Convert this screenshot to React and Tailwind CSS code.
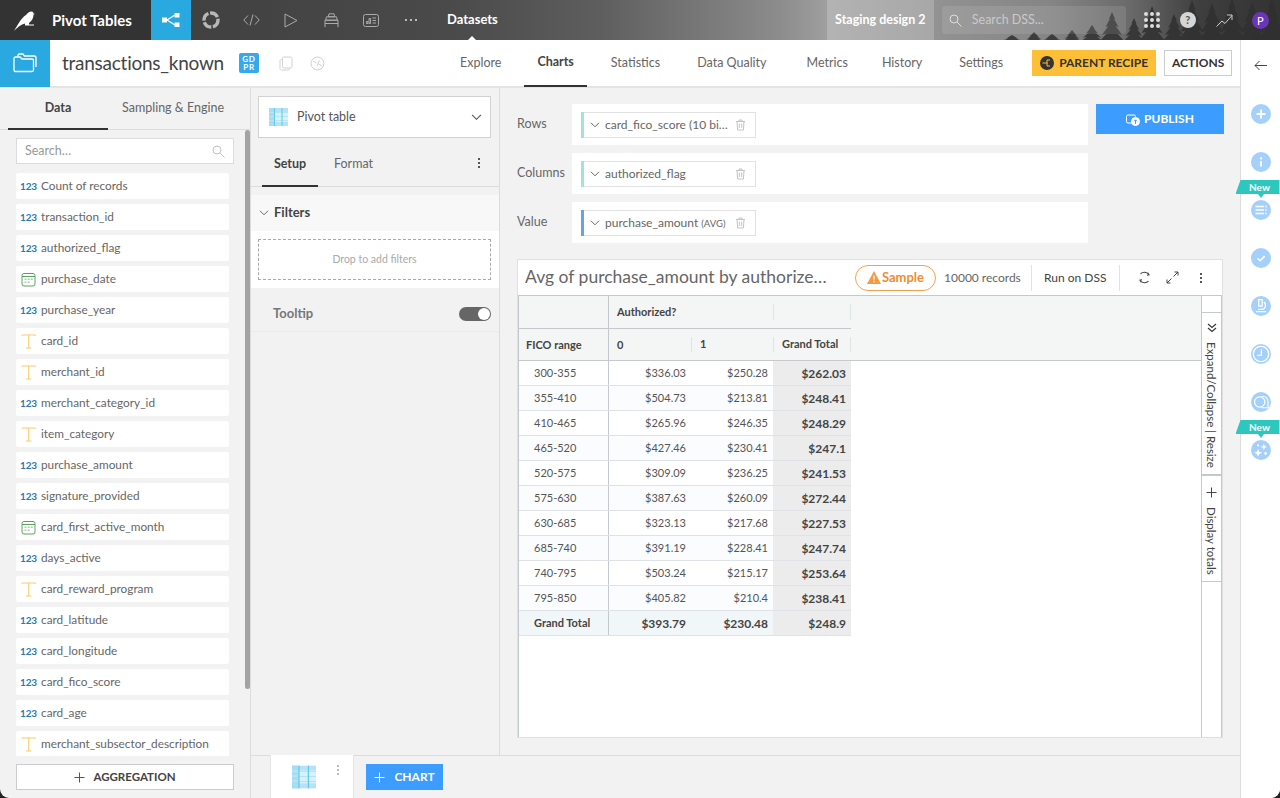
import React from "react";

const fields = [
  ["n", "Count of records"], ["n", "transaction_id"], ["n", "authorized_flag"], ["d", "purchase_date"],
  ["n", "purchase_year"], ["t", "card_id"], ["t", "merchant_id"], ["n", "merchant_category_id"],
  ["t", "item_category"], ["n", "purchase_amount"], ["n", "signature_provided"], ["d", "card_first_active_month"],
  ["n", "days_active"], ["t", "card_reward_program"], ["n", "card_latitude"], ["n", "card_longitude"],
  ["n", "card_fico_score"], ["n", "card_age"], ["t", "merchant_subsector_description"],
];

const rows = [
  ["300-355", "$336.03", "$250.28", "$262.03"], ["355-410", "$504.73", "$213.81", "$248.41"],
  ["410-465", "$265.96", "$246.35", "$248.29"], ["465-520", "$427.46", "$230.41", "$247.1"],
  ["520-575", "$309.09", "$236.25", "$241.53"], ["575-630", "$387.63", "$260.09", "$272.44"],
  ["630-685", "$323.13", "$217.68", "$227.53"], ["685-740", "$391.19", "$228.41", "$247.74"],
  ["740-795", "$503.24", "$215.17", "$253.64"], ["795-850", "$405.82", "$210.4", "$238.41"],
];

const trees = [
  [12, 35, 22], [34, 32, 20], [52, 34, 22], [72, 30, 20], [92, 25, 24], [112, 12, 26], [134, 18, 22], [152, 6, 28],
  [174, 14, 24], [192, 0, 30], [212, 3, 30], [232, -2, 30], [252, 2, 30], [272, -2, 30],
];

function treePoints(x, top, w) {
  const h = 42 - top;
  const pts = [[x, top]];
  const tiers = 4;
  for (let i = 1; i <= tiers; i++) {
    const y = top + (h * i) / tiers;
    const half = (w / 2) * (i / tiers);
    pts.push([x + half, y]);
    if (i < tiers) pts.push([x + half * 0.55, y - 1]);
  }
  for (let i = tiers; i >= 1; i--) {
    const y = top + (h * i) / tiers;
    const half = (w / 2) * (i / tiers);
    if (i < tiers) pts.push([x - half * 0.55, y - 1]);
    pts.push([x - half, y]);
  }
  return pts.map((p) => p.join(",")).join(" ");
}

function TypeIcon({ type }) {
  if (type === "n") return <span className="w-[17px] text-[10px] font-bold text-[#2b78b4] tracking-[-0.2px] leading-none text-center">123</span>;
  if (type === "d")
    return (
      <svg width="15" height="15" viewBox="0 0 15 15" fill="none" className="ml-[1px] mr-[1px]">
        <rect x="1" y="1.5" width="13" height="12.5" rx="2" stroke="#5f9f63" />
        <path d="M1 4.500h13" stroke="#5f9f63" />
        <path d="M3.500 6.500h2v1.600h-2zM6.600 6.500h2v1.600h-2zM9.700 6.500h2v1.600h-2zM3.500 9.500h2v1.600h-2zM6.600 9.500h2v1.600h-2z" fill="#a9cdaa" />
      </svg>
    );
  return (
    <svg width="15" height="15" viewBox="0 0 15 15" fill="none" className="ml-[1px] mr-[1px]">
      <path d="M1 1h13.500M1 1v.8M14.500 1v.8M7.700 1v13M5 14h5.400" stroke="#fbc96b" strokeWidth="1" />
    </svg>
  );
}

function Trash() {
  return (
    <svg width="11" height="12" viewBox="0 0 11 12" fill="none" stroke="#c4c4c4">
      <path d="M1 2.500h9M4 2.500V1h3v1.500M2 2.500l.6 8.500h5.800L9 2.500M4.300 4.500v4.500M6.700 4.500v4.500" />
    </svg>
  );
}

function Chevron({ size = 10, color = "#666" }) {
  return (
    <svg width={size} height={size * 0.6} viewBox="0 0 10 6" fill="none" stroke={color}>
      <path d="M1 .8l4 4 4-4" />
    </svg>
  );
}

function PivotIcon({ w = 19, h = 18 }) {
  return (
    <svg width={w} height={h} viewBox="0 0 19 18">
      <rect width="19" height="18" fill="#b5e3f5" />
      <rect y="4" width="19" height="10" fill="#d8f1fa" />
      <rect width="5" height="18" fill="#a8dcf2" />
      <path d="M0 4.500h19M0 8.500h19M0 12.500h19" stroke="#fff" />
      <path d="M0 4.500h19M0 8.500h19M0 12.500h19" stroke="#6fcdee" strokeWidth=".5" />
      <path d="M5.500 0v18M13 0v18" stroke="#62c8ec" />
    </svg>
  );
}

function Pill({ bar, children }) {
  return (
    <div className="flex h-[26px] w-[175px] border border-[#e2e2e2] border-l-0 bg-white items-center">
      <span className={`w-[3px] h-[26px] -my-px ${bar}`} />
      <span className="ml-[6px] mr-[5px]"><Chevron /></span>
      <span className="text-[12px] text-[#666] whitespace-nowrap w-[130px]">{children}</span>
      <Trash />
    </div>
  );
}

function DropRow({ label, bar, children, mb = "mb-2" }) {
  return (
    <div className={`flex items-center h-[41px] ${mb}`}>
      <span className="w-[55px] text-[12.5px] text-[#666]">{label}</span>
      <div className="w-[516px] h-[41px] bg-white flex items-center pl-[9px]">
        <Pill bar={bar}>{children}</Pill>
      </div>
    </div>
  );
}

function RailIcon({ children, size = 14 }) {
  return (
    <div className="w-5 h-5 rounded-full bg-[#a5d0fb] flex items-center justify-center">
      <svg width={size} height={size} viewBox="0 0 14 14" fill="none" stroke="#fff" strokeWidth="1.4">{children}</svg>
    </div>
  );
}

function NewBadge() {
  return (
    <div className="absolute left-[-15px] top-[-20px] w-[44px] h-[18px] pointer-events-none">
      <div className="w-[44px] h-[14px] bg-[#2ec7bd] [clip-path:polygon(5px_0,100%_0,100%_100%,0_100%)] text-white text-[10px] font-bold leading-[14px] text-center pl-[6px] pr-[2px]">
        New
      </div>
      <div className="w-0 h-0 ml-[22px] border-x-[3px] border-x-transparent border-t-[4px] border-t-[#2ec7bd]" />
    </div>
  );
}

function Dots({ color = "bg-[#555]" }) {
  return (
    <div className="flex flex-col gap-[2px]">
      <span className={`w-[2px] h-[2px] ${color}`} />
      <span className={`w-[2px] h-[2px] ${color}`} />
      <span className={`w-[2px] h-[2px] ${color}`} />
    </div>
  );
}

function NavIcon({ children }) {
  return <div className="relative w-10 h-10 flex items-center justify-center">{children}</div>;
}

export default function App() {
  return (
    <div className="w-[1280px] h-[798px] bg-[#222]">
      <div className="w-full h-full flex flex-col overflow-hidden rounded-b-[9px] bg-[#f2f2f2] font-['Lato','Noto_Sans',sans-serif] text-[#666]">
        {/* top bar */}
        <header className="relative h-10 shrink-0 flex items-center overflow-hidden bg-[linear-gradient(90deg,#3a3a3a_0px,#4a4a4a_450px,#5e5e5e_600px,#8c8c8c_780px,#a0a0a0_830px,#929292_935px,#858585_1050px,#6a6a6a_1130px,#3e3e3e_1200px,#333_1280px)]">
          <svg className="absolute left-[1000px] top-0" width="280" height="40" viewBox="0 0 280 40" fill="#303030" opacity=".85">
            {trees.map(([x, top, w]) => <polygon key={x} points={treePoints(x, top, w)} />)}
          </svg>
          <div className="relative w-[151px] h-10 bg-[#333] flex items-center">
            <svg className="ml-[13px]" width="22" height="22" viewBox="0 0 22 22" fill="#fff">
              <path d="M1 21.700C5 16 8 9 13 6c2-2 3-3.500 5.500-3.500C20 2.500 20.500 3.500 20.500 4.500L22 5l-1.500.5C20.500 9 19 12 16 14v1.500h5v1h-9v-2C8 15.500 5 18 1 21.700z" />
            </svg>
            <span className="ml-[17px] text-[15px] font-bold text-white whitespace-nowrap">Pivot Tables</span>
          </div>
          <div className="relative w-10 h-10 bg-[#29a9df] flex items-center justify-center">
            <svg width="18" height="14" viewBox="0 0 18 14" fill="#fff">
              <rect x="0" y="4.500" width="5" height="5" />
              <rect x="12.500" y="0" width="5" height="4.500" />
              <rect x="12.500" y="9.500" width="5" height="4.500" />
              <path d="M5 7l8-5M5 7l8 5" stroke="#fff" strokeWidth="1.200" />
            </svg>
          </div>
          <NavIcon>
            <svg width="18" height="18" viewBox="0 0 18 18" fill="none" stroke="#b8b8b8" strokeWidth="3.400" strokeDasharray="9 1.600">
              <circle cx="9" cy="9" r="7" />
            </svg>
          </NavIcon>
          <NavIcon>
            <svg width="17" height="12" viewBox="0 0 17 12" fill="none" stroke="#aaa">
              <path d="M5 1.500L.8 6 5 10.500M12 1.500L16.200 6 12 10.500M10 .5L7 11.500" />
            </svg>
          </NavIcon>
          <NavIcon>
            <svg width="14" height="15" viewBox="0 0 14 15" fill="none" stroke="#aaa">
              <path d="M1 1v13l12-6.500z" />
            </svg>
          </NavIcon>
          <NavIcon>
            <svg width="15" height="15" viewBox="0 0 15 15" fill="none" stroke="#aaa">
              <path d="M5 .8h5l.7 3H4.300zM2.500 3.800h10l.8 3.400H1.700zM1 7.200h13M1 7.200v7M14 7.200v7M1 10.500h13" />
            </svg>
          </NavIcon>
          <NavIcon>
            <svg width="16" height="13" viewBox="0 0 16 13" fill="none" stroke="#aaa">
              <rect x=".5" y=".5" width="15" height="12" rx="2" />
              <path d="M3.500 9.500v-2h1.500v2zM6 9.500v-5h1.500v5zM9.500 4h3.500M9.500 6.500h3.500M9.500 9h3.500" />
            </svg>
          </NavIcon>
          <NavIcon>
            <div className="flex gap-[3px]">
              <span className="w-[2px] h-[2px] bg-[#bbb]" /><span className="w-[2px] h-[2px] bg-[#bbb]" /><span className="w-[2px] h-[2px] bg-[#bbb]" />
            </div>
          </NavIcon>
          <div className="relative ml-[16px] h-10 flex items-center text-[13px] font-bold text-white">
            Datasets
            <span className="absolute left-[21px] bottom-0 w-0 h-0 border-x-[4px] border-x-transparent border-b-[4px] border-b-white" />
          </div>
          <div className="relative ml-[329px] w-[107px] h-10 bg-white/20 flex items-center justify-center text-[12.5px] font-bold text-white whitespace-nowrap">
            Staging design 2
          </div>
          <div className="relative ml-2 w-[184px] h-[28px] rounded-[3px] bg-white/10 flex items-center">
            <svg className="ml-[7px]" width="13" height="13" viewBox="0 0 13 13" fill="none" stroke="#ddd">
              <circle cx="5" cy="5" r="4" /><path d="M8 8l4.500 4.500" />
            </svg>
            <span className="ml-[10px] text-[12.5px] text-[#c9c9c9]">Search DSS...</span>
          </div>
          <div className="relative ml-[18px] w-[16px] h-[16px] grid grid-cols-3 gap-[2px]">
            {[0, 1, 2, 3, 4, 5, 6, 7, 8].map((i) => <span key={i} className="w-[4px] h-[4px] rounded-full bg-[#ddd]" />)}
          </div>
          <div className="relative ml-[20px] w-4 h-4 rounded-full bg-[#d6d6d6] text-[#555] text-[11px] font-bold leading-4 text-center">?</div>
          <svg className="relative ml-[20px]" width="17" height="13" viewBox="0 0 17 13" fill="none" stroke="#ccc">
            <path d="M.5 12.500l5.500-5.500 3 2.500 7-8M11 1h5v5" />
          </svg>
          <div className="relative ml-[19px] w-[17px] h-[17px] rounded-full bg-[#6a35b8] text-white text-[11px] leading-[17px] text-center">P</div>
        </header>

        {/* sub header + body */}
        <div className="flex flex-1 min-h-0">
          <div className="flex flex-col w-[1240px] min-h-0">
            <div className="h-[48px] shrink-0 bg-white border-b-2 border-[#e4e4e4] flex items-center">
              <div className="w-[50px] h-[47px] bg-[#29a9df] flex items-center justify-center">
                <svg width="24" height="20" viewBox="0 0 24 20" fill="none" stroke="#fff" strokeWidth="1.300">
                  <path d="M1 17V5.500c0-1 .6-1.500 1.500-1.500h4.500l2 2h10c1 0 1.500.6 1.500 1.500V17c0 1-.6 1.500-1.500 1.500h-16C1.600 18.500 1 18 1 17z" />
                  <path d="M5 3V2.200C5 1.500 5.500 1 6.200 1H10l1.500 2H21c1 0 2 .7 2 1.700V14" />
                </svg>
              </div>
              <span className="ml-3 text-[19px] text-[#444] tracking-[-0.25px] whitespace-nowrap w-[165px]">transactions_known</span>
              <div className="ml-3 w-5 h-5 rounded-[2px] bg-[#38a8ec] text-white text-[8px] font-bold leading-[8.500px] tracking-[.8px] text-center flex flex-col justify-center">
                <span>GD</span><span>PR</span>
              </div>
              <svg className="ml-[20px]" width="14" height="15" viewBox="0 0 14 15" fill="none" stroke="#d2d2d2">
                <rect x="3.500" y="1" width="9.500" height="11" rx="1.500" /><path d="M3 3.500c-1 0-2 .6-2 1.500v7.500c0 1 .8 1.500 1.500 1.500h6.500c1 0 1.500-.6 1.500-1.500" />
              </svg>
              <svg className="ml-[17px]" width="15" height="15" viewBox="0 0 15 15" fill="none" stroke="#d2d2d2">
                <circle cx="7.500" cy="7.500" r="6.500" /><path d="M3 5l3.500 2M12 10L8.500 8M9.500 4.500L7 10" />
              </svg>
              <nav className="flex h-[47px] ml-[135px] text-[12.5px] text-[#666]">
                <span className="flex items-center pt-px">Explore</span>
                <span className="flex items-center pt-px ml-[23px] px-[13px] font-bold text-[#444] border-b-2 border-[#333]">Charts</span>
                <span className="flex items-center pt-px ml-[24px]">Statistics</span>
                <span className="flex items-center pt-px ml-[37px]">Data Quality</span>
                <span className="flex items-center pt-px ml-[40px]">Metrics</span>
                <span className="flex items-center pt-px ml-[34px]">History</span>
                <span className="flex items-center pt-px ml-[37px]">Settings</span>
              </nav>
              <button className="ml-[29px] w-[124px] h-[26px] bg-[#fdbf35] flex items-center justify-center text-[12px] font-bold text-[#333] whitespace-nowrap">
                <svg className="mr-[5px]" width="14" height="14" viewBox="0 0 14 14">
                  <circle cx="7" cy="7" r="7" fill="#333" /><path d="M2.500 7h5M7 4h3M7 10h3M7 4v6" stroke="#fdbf35" fill="none" />
                </svg>
                PARENT RECIPE
              </button>
              <button className="ml-2 w-[68px] h-[26px] border border-[#ccc] bg-white text-[12px] font-bold text-[#333]">ACTIONS</button>
            </div>

            <div className="flex flex-1 min-h-0">
              {/* left column */}
              <aside className="relative w-[251px] shrink-0 border-r border-[#dcdcdc] flex flex-col">
                <div className="h-[42px] shrink-0 border-b border-[#dcdcdc] flex pl-2">
                  <div className="w-[100px] flex items-center justify-center font-bold text-[12.5px] text-[#444] border-b-2 border-[#333] -mb-px">Data</div>
                  <div className="ml-[14px] flex items-center text-[12.5px] text-[#666] whitespace-nowrap">Sampling &amp; Engine</div>
                </div>
                <div className="mx-4 mt-2 w-[218px] h-[26px] shrink-0 border border-[#dcdcdc] bg-white flex items-center justify-between px-2 text-[12.5px] text-[#999]">
                  Search…
                  <svg width="13" height="13" viewBox="0 0 13 13" fill="none" stroke="#c2c2c2">
                    <circle cx="5" cy="5" r="4" /><path d="M8 8l4.500 4.500" />
                  </svg>
                </div>
                <div className="flex-1 min-h-0 overflow-hidden mt-[9px] ml-4 w-[213px] flex flex-col gap-[5px]">
                  {fields.map(([t, name]) => (
                    <div key={name} className="h-[26px] shrink-0 rounded-[2px] bg-white flex items-center pl-[4px] text-[11.800px] text-[#666] whitespace-nowrap">
                      <TypeIcon type={t} />
                      <span className="ml-[4px]">{name}</span>
                    </div>
                  ))}
                </div>
                <button className="mx-4 mt-2 mb-2 w-[218px] h-[26px] shrink-0 border border-[#ccc] bg-white flex items-center justify-center text-[11.500px] font-bold text-[#444]">
                  <svg className="mr-2" width="11" height="11" viewBox="0 0 11 11" stroke="#555"><path d="M5.500.5v10M.5 5.500h10" /></svg>
                  AGGREGATION
                </button>
                <div className="absolute right-0 top-[42px] w-[5px] h-[559px] rounded-[3px] bg-[#a3a3a3]" />
              </aside>

              <div className="flex flex-col flex-1 min-w-0">
                <div className="flex flex-1 min-h-0">
                  {/* middle column */}
                  <section className="w-[249px] shrink-0 border-r border-[#dcdcdc] flex flex-col">
                    <div className="mx-[7px] mt-2 w-[233px] h-[42px] border border-[#d2d2d2] bg-white flex items-center pl-[10px] pr-2">
                      <PivotIcon />
                      <span className="ml-[9px] text-[12.5px] text-[#555] flex-1">Pivot table</span>
                      <Chevron size={11} color="#555" />
                    </div>
                    <div className="h-[49px] border-b border-[#dcdcdc] flex pl-[11px] items-stretch">
                      <div className="w-[56px] pt-[5px] flex items-center justify-center font-bold text-[12.5px] text-[#444] border-b-2 border-[#333] -mb-px">Setup</div>
                      <div className="ml-[16px] pt-[5px] flex items-center text-[12.5px] text-[#666]">Format</div>
                      <div className="ml-auto mr-[19px] pt-[2px] flex items-center"><Dots /></div>
                    </div>
                    <div className="mt-2 h-9 bg-[#f8f8f8] flex items-center pl-[8px]">
                      <Chevron />
                      <span className="ml-[5px] text-[13px] font-bold text-[#444]">Filters</span>
                    </div>
                    <div className="h-[57px] bg-white px-[7px] pt-2">
                      <div className="w-[233px] h-[41px] border border-dashed border-[#aaa] flex items-center justify-center text-[10.500px] text-[#aaa]">Drop to add filters</div>
                    </div>
                    <div className="h-[44px] pt-2 border-b border-[#eaeaea] flex items-center pl-[22px] pr-[8px] justify-between">
                      <span className="text-[13px] font-bold text-[#777]">Tooltip</span>
                      <div className="w-8 h-[14px] rounded-full bg-[#666] flex items-center justify-end pr-px">
                        <span className="w-3 h-3 rounded-full bg-white" />
                      </div>
                    </div>
                  </section>

                  {/* chart area */}
                  <section className="flex-1 min-w-0 flex flex-col pt-4 pl-[17px]">
                    <div className="flex items-start">
                      <div className="flex flex-col">
                        <DropRow label="Rows" bar="bg-[#a5e1d5]">card_fico_score (10 bi…</DropRow>
                        <DropRow label="Columns" bar="bg-[#a5e1d5]">authorized_flag</DropRow>
                        <DropRow label="Value" bar="bg-[#6f9fe3]" mb="mb-0">
                          purchase_amount <span className="text-[9.500px]">(AVG)</span>
                        </DropRow>
                      </div>
                      <button className="ml-2 w-[128px] h-[30px] bg-[#3d9cff] text-white text-[12px] font-bold flex items-center justify-center">
                        <svg className="mr-[4px]" width="14" height="13" viewBox="0 0 14 13" fill="none" stroke="#fff">
                          <rect x=".5" y="2" width="9" height="8" rx="1.500" />
                          <circle cx="9.500" cy="8.500" r="4" fill="#fff" />
                          <path d="M9.500 11V7M8 8.300l1.500-1.500 1.500 1.500" stroke="#3d9cff" />
                        </svg>
                        PUBLISH
                      </button>
                    </div>

                    {/* chart card */}
                    <div className="mt-4 w-[706px] h-[479px] border border-[#e0e0e0] bg-white flex flex-col">
                      <div className="h-[35px] shrink-0 flex items-center pl-[7px]">
                        <span className="w-[326px] text-[17.500px] text-[#666] whitespace-nowrap overflow-hidden">Avg of purchase_amount by authorize…</span>
                        <div className="ml-1 w-[81px] h-[26px] rounded-full border border-[#f5a04e] flex items-center justify-center text-[13px] font-bold text-[#f08c34]">
                          <svg className="mr-px" width="14" height="13" viewBox="0 0 14 13"><path d="M7 0l7 13H0z" fill="#f59a42" /><path d="M7 4.500v4M7 9.800v1.400" stroke="#fff" strokeWidth="1.300" /></svg>
                          Sample
                        </div>
                        <span className="ml-2 w-[77px] pt-px text-[12px] text-[#666] whitespace-nowrap">10000 records</span>
                        <span className="ml-[10px] w-px h-[26px] bg-[#e2e2e2]" />
                        <span className="ml-3 w-[62px] pt-px text-[12px] text-[#444] whitespace-nowrap">Run on DSS</span>
                        <span className="ml-[13px] w-px h-[26px] bg-[#e2e2e2]" />
                        <svg className="ml-[18px]" width="13" height="13" viewBox="0 0 13 13" fill="none" stroke="#444" strokeWidth="1.100">
                          <path d="M10.800 3.500A5.500 5.500 0 0 0 2.500 2.800M2.200 9.500A5.500 5.500 0 0 0 10.500 10.200M9.800 1.800l1.200 2-2 .4M3.200 11.200l-1.200-2 2-.4" />
                        </svg>
                        <svg className="ml-[15px]" width="13" height="13" viewBox="0 0 13 13" fill="none" stroke="#444">
                          <path d="M7.500 5.500L12 1M8.500 1H12v3.500M5.500 7.500L1 12M4.500 12H1V8.500" />
                        </svg>
                        <div className="ml-[21px]"><Dots /></div>
                      </div>
                      <div className="flex-1 min-h-0 flex border-t border-l border-[#c4c8cf]">
                        <div className="flex-1 min-w-0 flex flex-col">
                          <div className="bg-[#f4f6f5] border-b border-[#c4c8cf] text-[11px] font-bold text-[#444]">
                            <div className="flex h-[33px] w-[332px] border-b border-[#c4c8cf]">
                              <div className="w-[90px] border-r border-[#c4c8cf]" />
                              <div className="w-[164px] pt-px flex items-center pl-2">Authorized?</div>
                              <div className="w-[78px] my-2 border-l border-r border-[#dbe5e1]" />
                            </div>
                            <div className="flex h-[31px] w-[332px]">
                              <div className="w-[90px] pt-px border-r border-[#c4c8cf] flex items-center pl-[7px]">FICO range</div>
                              <div className="w-[82px] pt-px flex items-center pl-2">0</div>
                              <div className="w-[82px] my-2 flex items-center pl-2 border-l border-[#dbe5e1]">1</div>
                              <div className="w-[78px] my-2 flex items-center pl-2 border-l border-r border-[#dbe5e1] whitespace-nowrap">Grand Total</div>
                            </div>
                          </div>
                          {rows.map((r, i) => (
                            <div key={r[0]} className={`flex h-[25px] w-[332px] border-b border-[#dfe3e8] text-[11px] text-[#555] ${i % 2 ? "bg-[#fafcfd]" : "bg-white"}`}>
                              <div className="w-[90px] pt-px border-r border-[#c4c8cf] flex items-center pl-[15px]">{r[0]}</div>
                              <div className="w-[82px] pt-px flex items-center justify-end pr-[5px]">{r[1]}</div>
                              <div className="w-[82px] pt-px flex items-center justify-end pr-[5px]">{r[2]}</div>
                              <div className="w-[78px] pt-px flex items-center justify-end pr-[5px] bg-[#ececec] text-[12px] font-bold text-[#444]">{r[3]}</div>
                            </div>
                          ))}
                          <div className="flex h-[25px] w-[332px] border-b border-[#dfe3e8] text-[12px] font-bold text-[#444] bg-[#f1f6f9]">
                            <div className="w-[90px] pt-px border-r border-[#c4c8cf] flex items-center pl-[15px] whitespace-nowrap text-[11px]">Grand Total</div>
                            <div className="w-[82px] pt-px flex items-center justify-end pr-[5px]">$393.79</div>
                            <div className="w-[82px] pt-px flex items-center justify-end pr-[5px]">$230.48</div>
                            <div className="w-[78px] pt-px flex items-center justify-end pr-[5px] bg-[#ececec]">$248.9</div>
                          </div>
                        </div>
                        <div className="w-[21px] shrink-0 border-l border-r border-[#c4c8cf] flex flex-col bg-white text-[#444] text-[11.500px]">
                          <div className="h-[17px] border-b border-[#c4c8cf]" />
                          <div className="h-[163px] border-b-2 border-[#c4c8cf] flex flex-col items-center pt-[10px]">
                            <svg width="10" height="10" viewBox="0 0 10 10" fill="none" stroke="#333" strokeWidth="1.100"><path d="M1 1l4 3.500 4-3.500M1 5l4 3.500 4-3.500" /></svg>
                            <span className="mt-[9px] [writing-mode:vertical-rl] whitespace-nowrap">Expand/Collapse | Resize</span>
                          </div>
                          <div className="h-[106px] border-b border-[#c4c8cf] flex flex-col items-center pt-[11px]">
                            <svg width="11" height="11" viewBox="0 0 11 11" stroke="#444"><path d="M5.500.5v10M.5 5.500h10" /></svg>
                            <span className="mt-[9px] [writing-mode:vertical-rl] whitespace-nowrap">Display totals</span>
                          </div>
                        </div>
                      </div>
                    </div>
                  </section>
                </div>

                {/* bottom tabs */}
                <div className="h-[43px] shrink-0 border-t border-[#dcdcdc] flex items-stretch">
                  <div className="ml-[19px] w-[84px] -mt-px border-l border-r border-[#e4e4e4] bg-white relative flex items-center justify-center pr-[16px]">
                    <PivotIcon w={24} h={24} />
                    <div className="absolute right-[14px] top-[10px]"><Dots color="bg-[#bbb]" /></div>
                  </div>
                  <div className="flex items-start pt-2">
                    <button className="ml-3 w-[77px] h-[26px] bg-[#3d9cff] text-white text-[12px] font-bold flex items-center justify-center">
                      <svg className="mr-[9px]" width="11" height="11" viewBox="0 0 11 11" stroke="#fff"><path d="M5.500.5v10M.5 5.500h10" /></svg>
                      CHART
                    </button>
                  </div>
                </div>
              </div>
            </div>
          </div>

          {/* right rail */}
          <aside className="w-10 shrink-0 bg-white border-l border-[#dcdcdc] flex flex-col items-center">
            <svg className="mt-[20px]" width="13" height="11" viewBox="0 0 13 11" fill="none" stroke="#444">
              <path d="M13 5.500H1M5.500 1L1 5.500 5.500 10" />
            </svg>
            <div className="mt-[33px] flex flex-col gap-7 relative">
              <RailIcon><path d="M7 2.500v9M2.500 7h9" strokeWidth="1.800" /></RailIcon>
              <RailIcon><path d="M7 6v5.500" strokeWidth="2" /><path d="M7 2.500v1.800" strokeWidth="2" /></RailIcon>
              <div className="relative">
                <NewBadge />
                <RailIcon><path d="M1.500 3.500h8.500M1.500 7h8.500M1.500 10.500h8.500M11.200 3.500h1.500M11.200 7h1.500M11.200 10.500h1.500" strokeWidth="1.500" /></RailIcon>
              </div>
              <RailIcon size={16}><path d="M4 7.200l2.200 2.200 4-4" strokeWidth="1.400" /></RailIcon>
              <RailIcon size={16}><path d="M2.500 12h9M5 1.500h3v5.500H5zM9.500 3.500c2.500 2 1.500 6.500-2 6.500H4.500" strokeWidth="1.100" /></RailIcon>
              <RailIcon size={18}><circle cx="7" cy="7" r="6" strokeWidth="1" /><path d="M7.300 3.500V8H4" strokeWidth="1" /></RailIcon>
              <RailIcon size={18}><circle cx="6" cy="7" r="4" strokeWidth=".9" /><path d="M7.500 2.500c3 0 5 1.500 5 4.500 0 2-.5 3.500.5 4.500H7.500" strokeWidth=".9" /></RailIcon>
              <div className="relative">
                <NewBadge />
                <RailIcon size={16}>
                  <path d="M4.500 6l1 2.500 2.500 1-2.500 1-1 2.500-1-2.500-2.500-1 2.500-1zM9.500 1.500l.8 2 2 .8-2 .8-.8 2-.8-2-2-.8 2-.8z" fill="#fff" stroke="none" />
                  <circle cx="11" cy="10" r="1.200" fill="#fff" stroke="none" />
                  <circle cx="4.500" cy="3" r="1" fill="#fff" stroke="none" />
                </RailIcon>
              </div>
            </div>
          </aside>
        </div>
      </div>
    </div>
  );
}
